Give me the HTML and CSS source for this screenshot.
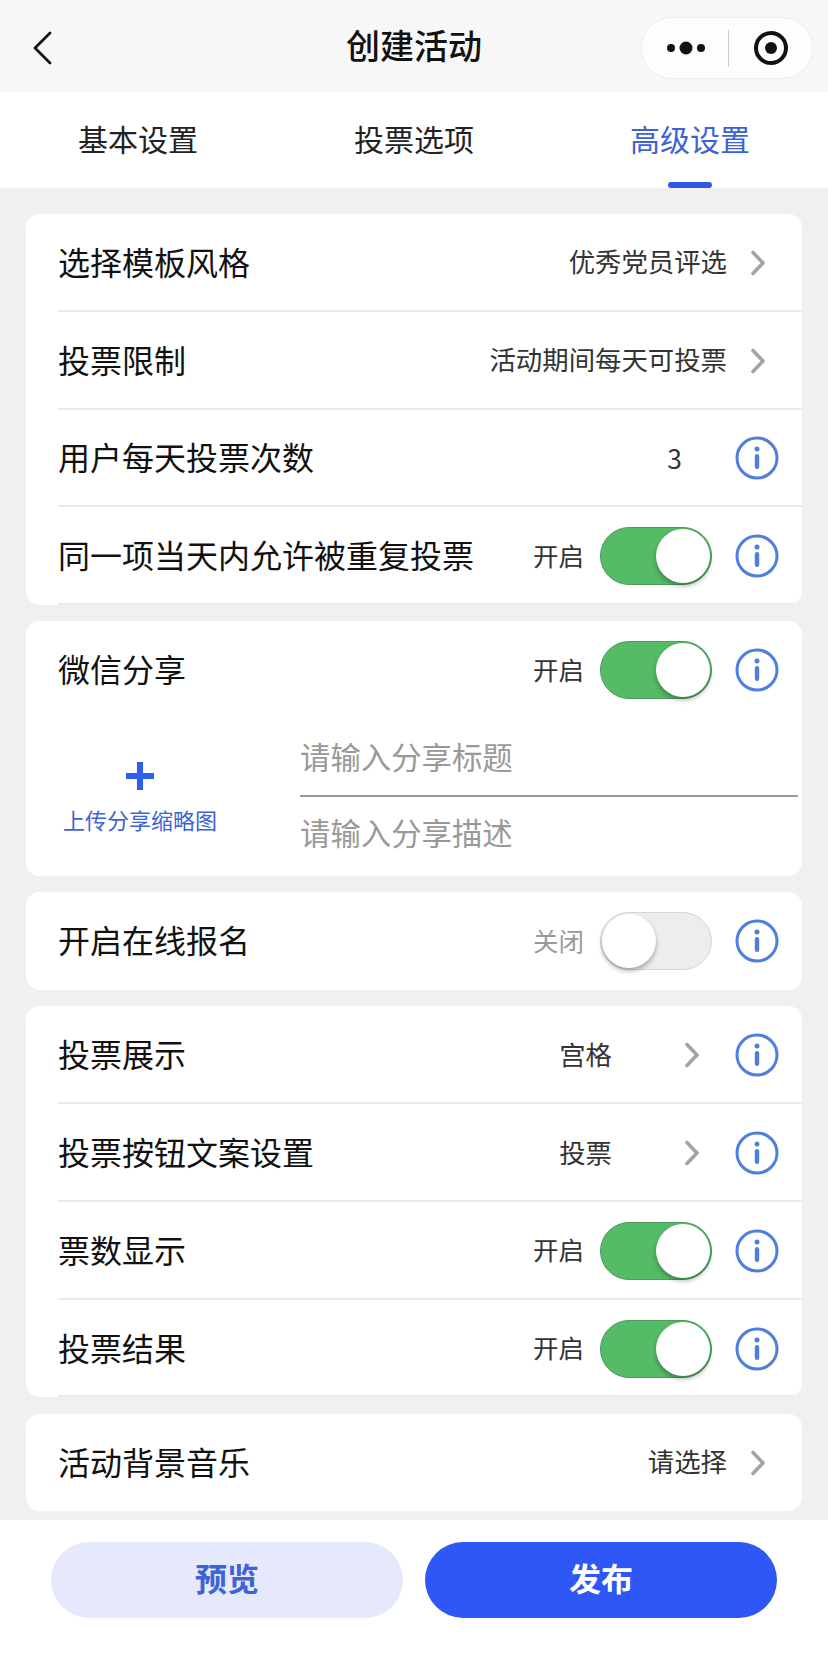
FILE: index.html
```html
<!DOCTYPE html>
<html lang="zh-CN">
<head>
    <meta charset="UTF-8">
    <meta name="viewport" content="width=device-width, initial-scale=1.0">
    <title>创建活动</title>
    <link rel="stylesheet" href="styles.css">
</head>
<body>
    <svg class="defs" width="0" height="0">
        <symbol id="chev" viewBox="0 0 16 26">
            <path d="M3 2.5 L13 13 L3 23.5" fill="none" stroke="#a3a3a3" stroke-width="3.6" stroke-linecap="round" stroke-linejoin="round"/>
        </symbol>
        <symbol id="info" viewBox="0 0 44 44">
            <circle cx="22" cy="22" r="20" fill="none" stroke="#4f7fde" stroke-width="3"/>
            <circle cx="22" cy="13" r="2.5" fill="#4f7fde"/>
            <rect x="19.8" y="18" width="4.4" height="15" rx="2.2" fill="#4f7fde"/>
        </symbol>
    </svg>

    <div class="page">
        <header class="nav">
            <svg class="back" width="20" height="34" viewBox="0 0 20 34">
                <path d="M18 2 L3 17 L18 32" fill="none" stroke="#111" stroke-width="2.8" stroke-linecap="round" stroke-linejoin="round"/>
            </svg>
            <div class="nav-title">创建活动</div>
            <div class="capsule">
                <svg width="38" height="14" viewBox="0 0 38 14">
                    <circle cx="4" cy="7" r="4" fill="#111"/>
                    <circle cx="19" cy="7" r="6.5" fill="#111"/>
                    <circle cx="34" cy="7" r="4" fill="#111"/>
                </svg>
                <span class="capsule-line"></span>
                <svg width="34" height="34" viewBox="0 0 34 34">
                    <circle cx="17" cy="17" r="15" fill="none" stroke="#111" stroke-width="4"/>
                    <circle cx="17" cy="17" r="6" fill="#111"/>
                </svg>
            </div>
        </header>

        <nav class="tabs">
            <div class="tab">基本设置</div>
            <div class="tab">投票选项</div>
            <div class="tab active">高级设置</div>
        </nav>

        <main class="content">
            <section class="card">
                <div class="row arrow-end">
                    <div class="label">选择模板风格</div>
                    <div class="value">优秀党员评选</div>
                    <svg class="chev"><use href="#chev"/></svg>
                </div>
                <div class="row arrow-end">
                    <div class="label">投票限制</div>
                    <div class="value">活动期间每天可投票</div>
                    <svg class="chev"><use href="#chev"/></svg>
                </div>
                <div class="row">
                    <div class="label">用户每天投票次数</div>
                    <div class="value num">3</div>
                    <svg class="info"><use href="#info"/></svg>
                </div>
                <div class="row">
                    <div class="label">同一项当天内允许被重复投票</div>
                    <div class="state">开启</div>
                    <div class="switch on"><span class="knob"></span></div>
                    <svg class="info"><use href="#info"/></svg>
                </div>
            </section>

            <section class="card">
                <div class="row plain">
                    <div class="label">微信分享</div>
                    <div class="state">开启</div>
                    <div class="switch on"><span class="knob"></span></div>
                    <svg class="info"><use href="#info"/></svg>
                </div>
                <div class="share">
                    <div class="upload">
                        <svg width="28" height="28" viewBox="0 0 28 28">
                            <path d="M11 0h6v11h11v6H17v11h-6V17H0v-6h11z" fill="#2f5ff0"/>
                        </svg>
                        <div class="upload-text">上传分享缩略图</div>
                    </div>
                    <div class="fields">
                        <div class="field title-field">请输入分享标题</div>
                        <div class="field desc-field">请输入分享描述</div>
                    </div>
                </div>
            </section>

            <section class="card">
                <div class="row plain">
                    <div class="label">开启在线报名</div>
                    <div class="state off">关闭</div>
                    <div class="switch"><span class="knob"></span></div>
                    <svg class="info"><use href="#info"/></svg>
                </div>
            </section>

            <section class="card">
                <div class="row">
                    <div class="label">投票展示</div>
                    <div class="value">宫格</div>
                    <svg class="chev wide"><use href="#chev"/></svg>
                    <svg class="info"><use href="#info"/></svg>
                </div>
                <div class="row">
                    <div class="label">投票按钮文案设置</div>
                    <div class="value">投票</div>
                    <svg class="chev wide"><use href="#chev"/></svg>
                    <svg class="info"><use href="#info"/></svg>
                </div>
                <div class="row">
                    <div class="label">票数显示</div>
                    <div class="state">开启</div>
                    <div class="switch on"><span class="knob"></span></div>
                    <svg class="info"><use href="#info"/></svg>
                </div>
                <div class="row">
                    <div class="label">投票结果</div>
                    <div class="state">开启</div>
                    <div class="switch on"><span class="knob"></span></div>
                    <svg class="info"><use href="#info"/></svg>
                </div>
            </section>

            <section class="card">
                <div class="row plain arrow-end">
                    <div class="label">活动背景音乐</div>
                    <div class="value">请选择</div>
                    <svg class="chev"><use href="#chev"/></svg>
                </div>
            </section>
        </main>

        <footer class="footer">
            <div class="btn preview">预览</div>
            <div class="btn publish">发布</div>
        </footer>
    </div>
</body>
</html>
```

FILE: styles.css
```css
* {
    box-sizing: border-box;
}
body {
    margin: 0;
    font-family: "Noto Sans CJK SC", "Noto Sans", sans-serif;
    background-color: #f0f0f0;
    color: #111;
}
.defs {
    display: block;
}
.page {
    height: 1659px;
    display: flex;
    flex-direction: column;
    overflow: hidden;
}

/* top bar */
.nav {
    height: 92px;
    flex: none;
    display: grid;
    grid-template-columns: minmax(0, 1fr) auto minmax(0, 1fr);
    align-items: center;
    padding: 4px 15px 0;
    background-color: #f7f7f7;
}
.back {
    display: block;
    margin-left: 17px;
}
.nav-title {
    margin-bottom: 6px;
    font-size: 34px;
    font-weight: 500;
    line-height: 48px;
}
.capsule {
    justify-self: end;
    width: 172px;
    min-width: 172px;
    height: 62px;
    display: flex;
    align-items: center;
    padding-left: 25px;
    background-color: #fdfdfd;
    border: 1px solid #eee;
    border-radius: 31px;
}
.capsule-line {
    width: 1px;
    height: 37px;
    margin: 0 25px 0 23px;
    background-color: #ccc;
}

/* tabs */
.tabs {
    height: 96px;
    flex: none;
    display: grid;
    grid-template-columns: repeat(3, 1fr);
    background-color: #fff;
}
.tab {
    position: relative;
    text-align: center;
    font-size: 30px;
    line-height: 92px;
    color: #222;
}
.tab.active {
    color: #3c62d8;
}
.tab.active::after {
    content: "";
    position: absolute;
    left: 116px;
    bottom: 0;
    width: 44px;
    height: 6px;
    border-radius: 3px;
    background-color: #2f57e6;
}

/* cards */
.content {
    flex: 1;
    min-height: 0;
    display: flex;
    flex-direction: column;
    gap: 16.3px;
    padding: 26px 26px 0;
}
.card {
    background-color: #fff;
    border-radius: 14px;
    overflow: hidden;
}
.row {
    height: 97.75px;
    display: flex;
    align-items: center;
    margin-left: 32px;
    padding-right: 23px;
    box-shadow: inset 0 -2px 0 #ebebeb;
}
.row.plain {
    box-shadow: none;
}
.row.arrow-end {
    padding-right: 36px;
}
.label {
    flex: 1;
    margin-bottom: 4px;
    font-size: 32px;
    color: #111;
}
.value {
    margin-bottom: 4px;
    font-size: 26.4px;
    color: #333;
}
.value.num {
    margin-right: 53px;
    margin-bottom: 2px;
}
.state {
    margin-bottom: 4px;
    font-size: 25.5px;
    color: #333;
}
.state.off {
    color: #999;
}
.chev {
    width: 16px;
    height: 26px;
    margin-left: 23px;
    flex: none;
}
.chev.wide {
    margin-left: 72px;
    margin-right: 35px;
}
.info {
    width: 44px;
    height: 44px;
    flex: none;
}

/* switch */
.switch {
    width: 112px;
    height: 58px;
    margin: 0 23px 0 16px;
    flex: none;
    display: flex;
    align-items: center;
    padding: 1px;
    background-color: #ededed;
    border: 1px solid #d6d6d6;
    border-radius: 29px;
}
.switch.on {
    justify-content: flex-end;
    background-color: #55bb66;
    border-color: #4f9a5e;
}
.knob {
    width: 54px;
    height: 54px;
    border-radius: 50%;
    background-color: #fff;
    box-shadow: 0 3px 5px rgba(0, 0, 0, 0.3);
}

/* share block */
.share {
    height: 157px;
    display: flex;
}
.upload {
    width: 228px;
    margin-right: 46px;
    display: flex;
    flex-direction: column;
    align-items: center;
    padding-top: 43px;
}
.upload svg {
    display: block;
}
.upload-text {
    margin-top: 12px;
    font-size: 22px;
    line-height: 34px;
    color: #3f63d6;
}
.fields {
    width: 498px;
}
.field {
    height: 78px;
    font-size: 30.4px;
    color: #999;
}
.title-field {
    line-height: 75px;
    border-bottom: 2px solid #999;
}
.desc-field {
    line-height: 71px;
}

/* bottom buttons */
.footer {
    height: 139px;
    flex: none;
    display: flex;
    gap: 22px;
    padding: 22px 51px 0;
    background-color: #fff;
}
.btn {
    flex: 1;
    height: 76px;
    border-radius: 38px;
    text-align: center;
    font-size: 32px;
    font-weight: 700;
    line-height: 70px;
}
.preview {
    background-color: #e6e8fb;
    color: #3f63d6;
}
.publish {
    background-color: #2f57f5;
    color: #fff;
}
```
